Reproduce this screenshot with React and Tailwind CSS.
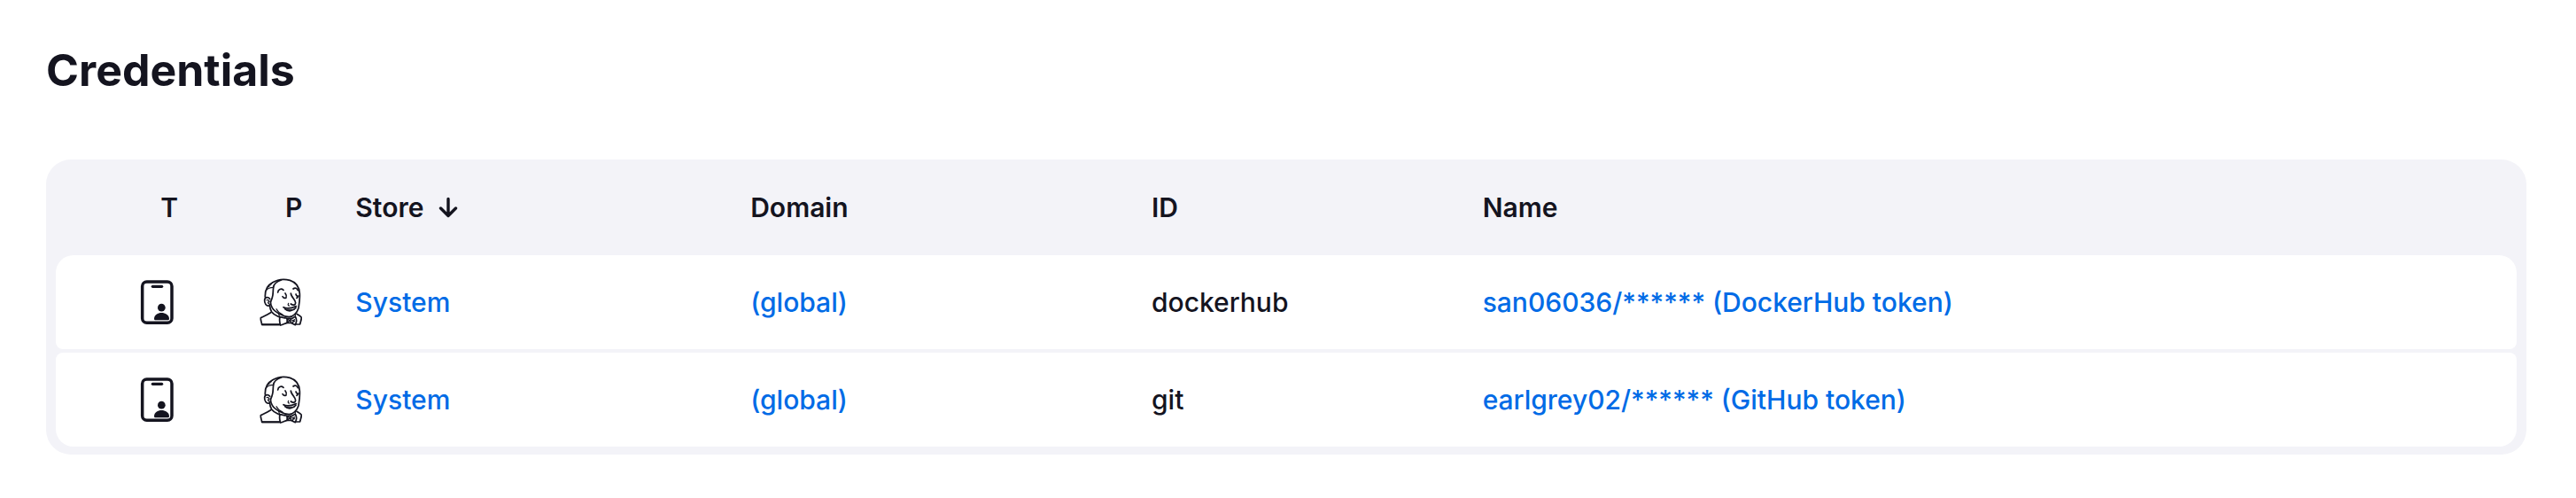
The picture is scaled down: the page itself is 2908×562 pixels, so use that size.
import React from "react";

const credentials = [
  { store: "System", domain: "(global)", id: "dockerhub", name: "san06036/****** (DockerHub token)" },
  { store: "System", domain: "(global)", id: "git", name: "earlgrey02/****** (GitHub token)" },
];

function IdCardIcon() {
  return (
    <svg viewBox="39 39 144 162" className="ml-auto block h-[54px] w-12" role="img" aria-label="Credential type">
      <rect x="62" y="51" width="100" height="139" rx="15" fill="none" stroke="currentColor" strokeWidth="10.5" />
      <path d="M97 67H128" stroke="currentColor" strokeWidth="9.5" strokeLinecap="round" />
      <circle cx="127" cy="138.5" r="13" fill="currentColor" />
      <path d="M102 176c0-13 13-20 25-20s26 7 26 20c0 3-2 4.500-5 4.500h-41c-3 0-5-1.500-5-4.500z" fill="currentColor" />
    </svg>
  );
}

function ButlerIcon() {
  return (
    <svg
      viewBox="39 39 144 162"
      className="ml-auto block h-[54px] w-12"
      role="img"
      aria-label="Provider"
      fill="none"
      stroke="currentColor"
      strokeWidth="5.2"
      strokeLinecap="round"
      strokeLinejoin="round"
    >
      {/* shoulders */}
      <path d="M77 155C66 162 53 168 43 173C42 181 46 188 47 196H109" />
      <path d="M165 160C171 164 178 167 181 172C181 180 177 188 176 195H160" />
      <path d="M48 196H106" strokeWidth="6" />
      {/* head and jaw */}
      <path d="M58 103C57 82 65 63 82 54C100 43 124 41 142 46C164 53 174 70 175 91C176 108 174 124 171 140C166 155 154 168 139 170C119 169 91 154 82 139C78 132 76 124 76 117" />
      <path d="M73 128C74 139 76 147 80 153C87 163 98 166 108 172" />
      {/* hair */}
      <path d="M112 45C96 51 87 58 86 70C84 84 86 92 82 104C81 110 78 115 76 119" />
      <path d="M61 80C67 72 76 70 86 70" strokeWidth="3.5" />
      <path d="M82 54C80 60 75 65 69 69" strokeWidth="3" />
      {/* ear */}
      <path d="M74 109C68 101 57 102 56 113C55 124 62 135 72 132" />
      <path d="M63 113C68 111 72 114 70 119C66 120 68 125 71 124" strokeWidth="3.5" />
      {/* brows and eyes */}
      <path d="M101 87C102 77 112 72 120 79" />
      <path d="M153 75C159 70 166 72 169 80" />
      <path d="M126 90C130 95 131 100 129 105C125 107 120 106 117 101" />
      <path d="M162 93C164 99 167 101 171 99L165 106" />
      {/* nose */}
      <path d="M145 90C145 101 161 113 161 122C161 130 152 132 145 126" />
      <path d="M137 124C134 128 136 132 140 132" strokeWidth="3.5" />
      {/* mouth and cheek */}
      <path d="M120 137C130 143 146 141 163 134" />
      <path d="M125 143C135 153 153 151 162 139" />
      <path d="M130 145H156" strokeWidth="3" />
      <path d="M96 143C101 153 108 158 117 162" strokeWidth="3.5" />
      {/* bow tie */}
      <path d="M108 170C106 179 107 190 110 198C118 196 125 192 132 190C135 183 133 177 130 174C122 174 115 170 108 170Z" fill="white" />
      <path d="M133 175H146L149 190H133Z" fill="white" />
      <path d="M147 176L160 169C165 177 164 189 160 197L148 191" fill="white" />
      <path d="M135 178L146 187M136 187L145 178M150 181L157 185M151 190L157 179" strokeWidth="4" />
      <path d="M103 157L107 170M160 158V169" strokeWidth="3.5" />
    </svg>
  );
}

function SortArrow() {
  return (
    <svg
      viewBox="0 0 24 24"
      className="h-6 w-6"
      fill="none"
      stroke="currentColor"
      strokeWidth="3.4"
      strokeLinecap="round"
      strokeLinejoin="round"
      aria-hidden="true"
    >
      <path d="M12 2.500V21.500M3.500 13L12 21.500L20.500 13" />
    </svg>
  );
}

const cell = "h-[106px] bg-white px-[30px] py-0";
const left = "rounded-l-lg group-first:rounded-tl-[20px] group-last:rounded-bl-[20px]";
const right = "rounded-r-lg group-first:rounded-tr-[20px] group-last:rounded-br-[20px]";

function TextLink({ children }) {
  return (
    <a href="#" className="text-[#006be6] hover:underline">
      {children}
    </a>
  );
}

export default function App() {
  return (
    <main className="min-h-screen bg-white pt-12 pr-14 pb-12 pl-[52px] font-['Inter',sans-serif] text-[#14141f]">
      <h1 className="text-[50px] leading-[62px] font-bold">Credentials</h1>
      <div className="mt-[70px] rounded-[28px] bg-[#f3f3f8] px-[11px] pb-[5px]">
        <table className="w-full table-fixed border-separate border-spacing-x-0 border-spacing-y-1 text-left text-[30px] leading-10">
          <colgroup>
            <col className="w-[6.05%]" />
            <col className="w-[5.05%]" />
            <col className="w-[16.05%]" />
            <col className="w-[16.3%]" />
            <col className="w-[13.45%]" />
            <col />
          </colgroup>
          <thead>
            <tr className="h-[100px]">
              <th className="px-[30px] py-0 text-right font-semibold">T</th>
              <th className="px-[30px] py-0 text-right font-semibold">P</th>
              <th className="px-[30px] py-0 font-semibold" aria-sort="descending">
                <button type="button" className="flex items-center gap-4 font-semibold">
                  Store
                  <SortArrow />
                </button>
              </th>
              <th className="px-[30px] py-0 font-semibold">Domain</th>
              <th className="px-[30px] py-0 font-semibold">ID</th>
              <th className="px-[30px] py-0 font-semibold">Name</th>
            </tr>
          </thead>
          <tbody className="font-medium">
            {credentials.map((c) => (
              <tr key={c.id} className="group">
                <td className={`${cell} ${left}`}>
                  <IdCardIcon />
                </td>
                <td className={cell}>
                  <ButlerIcon />
                </td>
                <td className={cell}>
                  <TextLink>{c.store}</TextLink>
                </td>
                <td className={cell}>
                  <TextLink>{c.domain}</TextLink>
                </td>
                <td className={cell}>{c.id}</td>
                <td className={`${cell} ${right}`}>
                  <TextLink>{c.name}</TextLink>
                </td>
              </tr>
            ))}
          </tbody>
        </table>
      </div>
    </main>
  );
}
